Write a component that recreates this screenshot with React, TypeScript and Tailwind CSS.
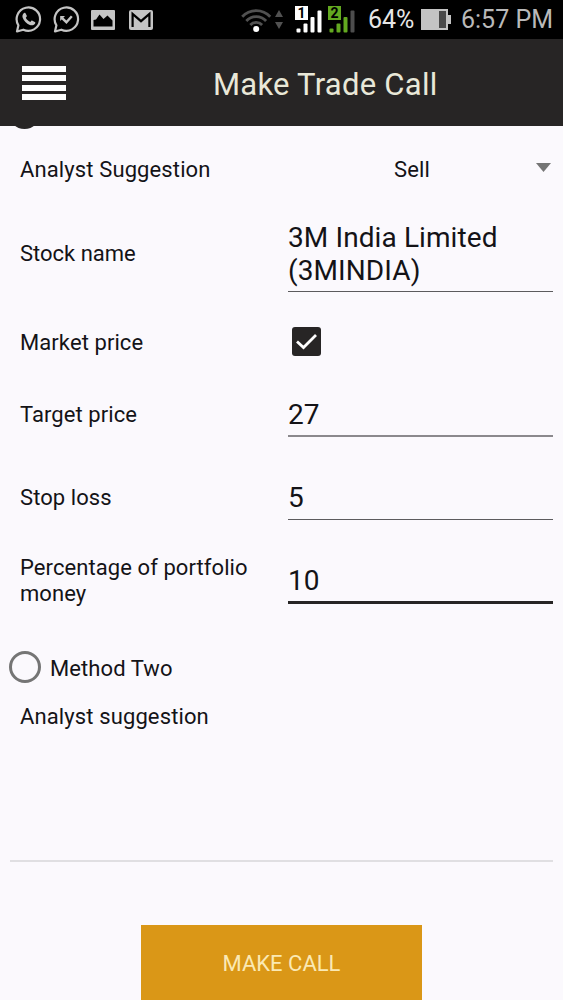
import { useState } from 'react';

const WhatsAppIcon = () => (
  <svg className="w-[27px] h-[29px]" viewBox="0 0 27 29" fill="none">
    <path d="M2 26.5 L3.4 20.3 A11.7 11.7 0 1 1 8.3 24.7 Z" stroke="#c4c4c4" strokeWidth="2.2" strokeLinejoin="round" />
    <path
      d="M8.7 8.2c.5-.6 1.3-.7 1.8 0l1.3 2.6c.2.5-.1 1-1 1.9 1 2 2.6 3.5 4.6 4.3.9-1.2 1.4-1.6 2-1.3l2.4 1.3c.7.4.6 1.2 0 2-1.2 1.4-3 1.7-5 .9-3.4-1.4-5.9-3.9-7.1-7.2-.6-1.7-.1-3.4 1-4.5z"
      fill="#c4c4c4"
    />
  </svg>
);

const MissedChatIcon = () => (
  <svg className="w-[27px] h-[29px]" viewBox="0 0 27 29" fill="none">
    <path d="M2 26.5 L3.4 20.3 A11.7 11.7 0 1 1 8.3 24.7 Z" stroke="#c4c4c4" strokeWidth="2.2" strokeLinejoin="round" />
    <path d="M8.6 12.6 L13.4 17.2 L18.8 11.2" stroke="#c4c4c4" strokeWidth="2.4" />
    <path d="M7.2 16 V11 H12 Z" fill="#c4c4c4" />
  </svg>
);

const PictureIcon = () => (
  <svg className="w-6 h-5" viewBox="0 0 24 20">
    <rect width="24" height="20" rx="1" fill="#c4c4c4" />
    <path d="M2.5 16.5 V10 L5 9.5 L8.5 4.5 L12.5 9 L16.5 5.5 L21.5 10.5 V16.5 Z" fill="#000" />
  </svg>
);

const MailIcon = () => (
  <svg className="w-6 h-5" viewBox="0 0 24 20">
    <rect width="24" height="20" rx="2" fill="#c4c4c4" />
    <path d="M3.6 17 V4 L12 11.2 L20.4 4 V17" fill="none" stroke="#000" strokeWidth="2.2" />
  </svg>
);

const WifiIcon = () => (
  <svg className="w-[42px] h-[26px]" viewBox="0 0 42 26" fill="none">
    <g stroke="#515151" strokeWidth="2.8">
      <path d="M1.2 9.8 A19 19 0 0 1 29.2 9.8" />
      <path d="M5.3 14 A13.5 13.5 0 0 1 25.1 14" />
      <path d="M9.3 18 A8 8 0 0 1 21.1 18" />
    </g>
    <circle cx="15.2" cy="22" r="3" fill="#fff" />
    <path d="M38 3 L42 10 H34 Z M34 15 H42 L38 22 Z" fill="#515151" />
  </svg>
);

interface SignalProps {
  sim: string;
  color: string;
  lastColor: string;
}

const SignalIcon = ({ sim, color, lastColor }: SignalProps) => (
  <svg className="w-[27px] h-7" viewBox="0 0 27 28">
    <rect width="13" height="14" fill={color} />
    <text x="6.5" y="12" textAnchor="middle" fontSize="14" fontWeight="700" fontFamily="Roboto, sans-serif" fill="#000">
      {sim}
    </text>
    <rect x="1.5" y="22.5" width="4" height="4" rx="1" fill={color} />
    <rect x="8.5" y="17.5" width="4" height="9" rx="1" fill={color} />
    <rect x="15.5" y="11" width="4" height="15.5" rx="1" fill={color} />
    <rect x="22.5" y="4.5" width="4" height="22" rx="1" fill={lastColor} />
  </svg>
);

const BatteryIcon = () => (
  <svg className="w-[30px] h-[21px]" viewBox="0 0 30 21">
    <rect width="27" height="21" fill="#c4c4c4" />
    <rect x="27" y="6" width="3" height="9" fill="#c4c4c4" />
    <rect x="18" y="2" width="7" height="17" fill="#4a4a4a" />
  </svg>
);

const StatusBar = () => (
  <div className="flex h-[39px] items-center bg-black pl-[15px] text-[25px] leading-[39px]">
    <WhatsAppIcon />
    <div className="ml-[11px] flex"><MissedChatIcon /></div>
    <div className="ml-[11px] flex"><PictureIcon /></div>
    <div className="ml-[14px] flex"><MailIcon /></div>
    <div className="ml-[88px] flex"><WifiIcon /></div>
    <div className="ml-[12px] flex"><SignalIcon sim="1" color="#fff" lastColor="#fff" /></div>
    <div className="ml-[6px] flex"><SignalIcon sim="2" color="#63a920" lastColor="#4d4d4d" /></div>
    <span className="ml-[13px] w-[53px] whitespace-nowrap text-[#e6e6e6]">64%</span>
    <BatteryIcon />
    <span className="ml-[10px] whitespace-nowrap text-[#b9b9b9]">6:57 PM</span>
  </div>
);

const Header = () => (
  <header className="relative z-10 flex h-[87px] items-center bg-[#272525] pl-[22px]">
    <button className="mt-px flex w-11 flex-col gap-[3.5px]">
      <span className="h-1.5 bg-white" />
      <span className="h-1.5 bg-white" />
      <span className="h-1.5 bg-white" />
      <span className="h-1.5 bg-white" />
    </button>
    <h1 className="ml-[147px] mt-[5px] whitespace-nowrap text-[31px] tracking-[0.25px] text-[#e9e8d8]">Make Trade Call</h1>
  </header>
);

export default function App() {
  const [marketPrice, setMarketPrice] = useState(true);

  return (
    <div className="h-[1000px] w-[563px] overflow-hidden bg-[#fbf9fd] font-['Roboto',sans-serif] text-[22px] leading-[26px] text-[#141317]">
      <StatusBar />
      <Header />

      <main className="flex flex-col">
        {/* first radio is scrolled under the header */}
        <div className="-mt-7 ml-[9px] h-[31px] w-[31px] rounded-full bg-[#272525]" />

        <div className="flex h-20 items-center pl-5">
          <span className="w-[374px] pt-[2px] tracking-[0.12px]">Analyst Suggestion</span>
          <span className="w-[142px] pt-[2px] tracking-[0.12px]">Sell</span>
          <svg className="-mt-[3px] h-[9px] w-[15px]" viewBox="0 0 15 9">
            <path d="M0 0 H15 L7.5 9 Z" fill="#757575" />
          </svg>
        </div>

        <div className="mt-[2px] flex h-[84px] items-center pl-5">
          <span className="w-[268px] pt-[2px]">Stock name</span>
          <div className="h-[78px] w-[265px] border-b border-[#5c5b5e] pt-[7px] text-[28px] leading-[33px] tracking-[0.1px]">
            3M India Limited (3MINDIA)
          </div>
        </div>

        <div className="mt-[17px] flex h-[60px] items-center pl-5">
          <span className="w-[272px] pt-[2px] tracking-[0.08px]">Market price</span>
          <button
            onClick={() => setMarketPrice(!marketPrice)}
            className="mb-[2px] flex h-[29px] w-[29px] items-center justify-center rounded-[3px] bg-[#272525]"
          >
            {marketPrice && (
              <svg className="h-[17px] w-[23px]" viewBox="0 0 23 17" fill="none">
                <path d="M2 8.5 L8.5 14.5 L21 2" stroke="#fff" strokeWidth="2.8" />
              </svg>
            )}
          </button>
        </div>

        <div className="mt-[19px] flex h-[46px] items-center pl-5">
          <span className="w-[268px] pt-[2px] tracking-[0.08px]">Target price</span>
          <div className="h-full w-[265px] border-b-2 border-[#8b898d] pt-[7px] text-[28px] leading-[33px]">27</div>
        </div>

        <div className="mt-[37px] flex h-[46px] items-center pl-5">
          <span className="w-[268px] pt-[2px] tracking-[0.08px]">Stop loss</span>
          <div className="h-[45px] w-[265px] border-b border-[#5c5b5e] pt-[6px] text-[28px] leading-[33px]">5</div>
        </div>

        <div className="mt-[36px] flex h-12 items-center pl-5">
          <span className="w-[268px] pt-[2px] tracking-[0.08px]">Percentage of portfolio money</span>
          <div className="h-full w-[265px] border-b-[3px] border-[#272525] pt-[8px] text-[28px] leading-[33px]">10</div>
        </div>

        <div className="mt-[47px] flex h-8 items-center pl-[9px]">
          <span className="h-8 w-8 rounded-full border-[3px] border-[#757575]" />
          <span className="ml-[9px] mt-[3px] tracking-[0.08px]">Method Two</span>
        </div>

        <div className="mt-[21px] pl-5 tracking-[0.12px]">Analyst suggestion</div>

        <div className="mx-[10px] mt-[130px] h-[2px] bg-[#e0dfe2]" />

        <button className="ml-[141px] mt-[63px] h-[77px] w-[281px] bg-[#da9717] text-[22px] text-[#fae9b4]">
          MAKE CALL
        </button>
      </main>
    </div>
  );
}
